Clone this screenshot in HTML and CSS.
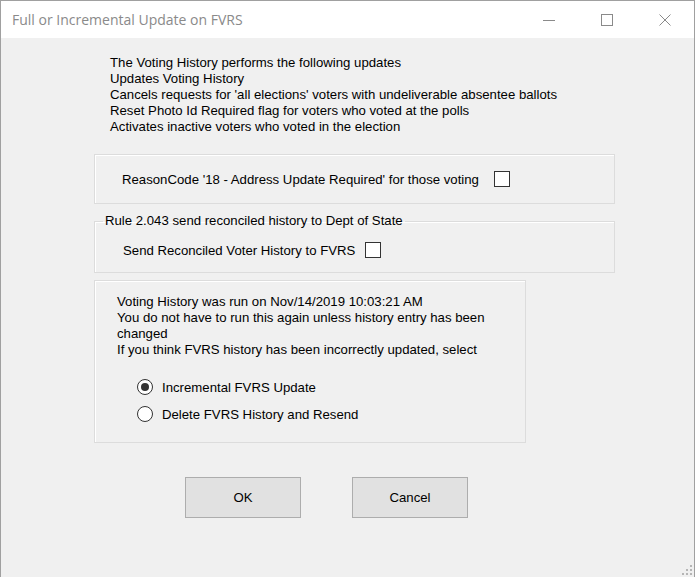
FILE: index.html
```html
<!DOCTYPE html>
<html lang="en">
<head>
    <meta charset="UTF-8">
    <meta name="viewport" content="width=device-width, initial-scale=1.0">
    <title>Full or Incremental Update on FVRS</title>
    <link rel="stylesheet" href="styles.css">
</head>
<body>
<div class="window">
    <div class="titlebar">
        <div class="title">Full or Incremental Update on FVRS</div>
        <div class="caption-buttons">
            <span class="cap-btn"><svg width="12" height="12" viewBox="0 0 12 12"><path d="M0 6.5h12" stroke="#8a8a8a" stroke-width="1" fill="none"/></svg></span>
            <span class="cap-btn"><svg width="12" height="12" viewBox="0 0 12 12"><rect x="0.5" y="0.5" width="11" height="11" stroke="#8a8a8a" stroke-width="1" fill="none"/></svg></span>
            <span class="cap-btn"><svg width="12" height="12" viewBox="0 0 12 12"><path d="M0.5 0.5L11.5 11.5M11.5 0.5L0.5 11.5" stroke="#8a8a8a" stroke-width="1" fill="none"/></svg></span>
        </div>
    </div>
    <div class="client">
        <div class="intro">
            <div>The Voting History performs the following updates</div>
            <div>Updates Voting History</div>
            <div>Cancels requests for 'all elections' voters with undeliverable absentee ballots</div>
            <div>Reset Photo Id Required flag for voters who voted at the polls</div>
            <div>Activates inactive voters who voted in the election</div>
        </div>

        <div class="group group-reason">
            <label class="check-row">
                <span>ReasonCode '18 - Address Update Required' for those voting</span>
                <span class="checkbox"></span>
            </label>
        </div>

        <fieldset class="group group-rule">
            <legend>Rule 2.043 send reconciled history to Dept of State</legend>
            <label class="check-row">
                <span>Send Reconciled Voter History to FVRS</span>
                <span class="checkbox"></span>
            </label>
        </fieldset>

        <div class="group group-history">
            <div class="history-text">Voting History was run on Nov/14/2019 10:03:21 AM<br>You do not have to run this again unless history entry has been changed<br>If you think FVRS history has been incorrectly updated, select</div>
            <label class="radio-row"><span class="radio checked"></span>Incremental FVRS Update</label>
            <label class="radio-row"><span class="radio"></span>Delete FVRS History and Resend</label>
        </div>

        <div class="buttons">
            <button class="btn">OK</button>
            <button class="btn">Cancel</button>
        </div>
    </div>
    <svg class="grip" width="10" height="10" viewBox="0 0 10 10">
        <rect x="8" y="0" width="2" height="2" fill="#b5b5b5"/>
        <rect x="4" y="4" width="2" height="2" fill="#b5b5b5"/>
        <rect x="8" y="4" width="2" height="2" fill="#b5b5b5"/>
        <rect x="0" y="8" width="2" height="2" fill="#b5b5b5"/>
        <rect x="4" y="8" width="2" height="2" fill="#b5b5b5"/>
        <rect x="8" y="8" width="2" height="2" fill="#b5b5b5"/>
    </svg>
</div>
</body>
</html>
```

FILE: styles.css
```css
body { margin: 0; font-family: "Liberation Sans", Arial, sans-serif; font-size: 13.2px; color: #000; background: #f0f0f0; }
.window { width: 695px; height: 577px; box-sizing: border-box; border: 1px solid #a0a0a0; border-bottom: none; background: #f0f0f0; position: relative; display: flex; flex-direction: column; }
.titlebar { height: 37px; background: #fff; display: flex; align-items: center; flex-shrink: 0; }
.title { padding-left: 11px; font-family: "Open Sans", "Noto Sans", sans-serif; font-size: 14px; color: #8a8a8a; }
.caption-buttons { margin-left: auto; display: flex; }
.cap-btn { width: 58px; height: 37px; display: flex; align-items: center; justify-content: center; }
.client { padding: 17px 0 0 93px; }
.intro { margin-left: 16px; line-height: 16px; }
.group { box-sizing: border-box; border: 1px solid #dcdcdc; box-shadow: inset 1px 1px 0 #fff; }
.group-reason { margin-top: 19px; width: 521px; height: 50px; display: flex; align-items: center; padding-left: 27px; }
.group-rule { margin: 9px 0 0 0; width: 521px; padding: 0; min-inline-size: 0; }
.group-rule legend { margin-left: 8px; padding: 0 2px; line-height: 16px; }
.group-rule .check-row { margin: 13px 0 14px 28px; }
.check-row { display: flex; align-items: center; height: 16px; }
.checkbox { width: 16px; height: 16px; box-sizing: border-box; border: 1px solid #333; background: #fff; margin-left: 15px; }
.group-rule .checkbox { margin-left: 10px; }
.group-history { margin-top: 7px; width: 432px; height: 163px; padding: 13px 0 0 22px; }
.history-text { width: 380px; line-height: 16px; margin-bottom: 21px; }
.radio-row { display: flex; align-items: center; height: 16px; margin: 0 0 11px 20px; }
.radio { width: 16px; height: 16px; box-sizing: border-box; border: 1px solid #333; border-radius: 50%; background: #fff; margin-right: 9px; display: flex; align-items: center; justify-content: center; }
.radio.checked::after { content: ""; width: 8px; height: 8px; border-radius: 50%; background: #333; }
.buttons { margin: 34px 0 0 91px; display: flex; gap: 51px; }
.btn { width: 116px; height: 41px; box-sizing: border-box; border: 1px solid #adadad; background: #e1e1e1; font-family: inherit; font-size: 13.2px; color: #000; padding: 0; }
.grip { position: absolute; right: 2px; bottom: 2px; }
```
